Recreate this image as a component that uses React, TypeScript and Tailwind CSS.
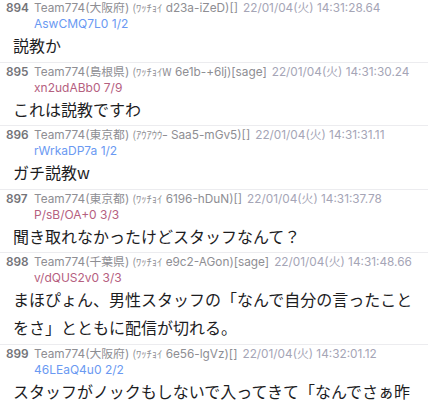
import React from "react";

type Post = {
  no: number;
  pref: string;
  wacchoi: string;
  mail: string;
  date: string;
  id: string;
  count: string;
  many: boolean;
  body: string;
};

const posts: Post[] = [
  { no: 894, pref: "大阪府", wacchoi: "ﾜｯﾁｮｲ d23a-iZeD", mail: "", date: "22/01/04(火) 14:31:28.64", id: "AswCMQ7L0", count: "1/2", many: false, body: "説教か" },
  { no: 895, pref: "島根県", wacchoi: "ﾜｯﾁｮｲW 6e1b-+6lj", mail: "sage", date: "22/01/04(火) 14:31:30.24", id: "xn2udABb0", count: "7/9", many: true, body: "これは説教ですわ" },
  { no: 896, pref: "東京都", wacchoi: "ｱｳｱｳｳｰ Saa5-mGv5", mail: "", date: "22/01/04(火) 14:31:31.11", id: "rWrkaDP7a", count: "1/2", many: false, body: "ガチ説教w" },
  { no: 897, pref: "東京都", wacchoi: "ﾜｯﾁｮｲ 6196-hDuN", mail: "", date: "22/01/04(火) 14:31:37.78", id: "P/sB/OA+0", count: "3/3", many: true, body: "聞き取れなかったけどスタッフなんて？" },
  { no: 898, pref: "千葉県", wacchoi: "ﾜｯﾁｮｲ e9c2-AGon", mail: "sage", date: "22/01/04(火) 14:31:48.66", id: "v/dQUS2v0", count: "3/3", many: true, body: "まほぴょん、男性スタッフの「なんで自分の言ったことをさ」とともに配信が切れる。" },
  { no: 899, pref: "大阪府", wacchoi: "ﾜｯﾁｮｲ 6e56-lgVz", mail: "", date: "22/01/04(火) 14:32:01.12", id: "46LEaQ4u0", count: "2/2", many: false, body: "スタッフがノックもしないで入ってきて「なんでさぁ昨" },
];

function PostItem({ p, first }: { p: Post; first: boolean }) {
  const [kana, rest] = p.wacchoi.split(" ");
  return (
    <div className={first ? "pb-[2.5px]" : "border-t border-[#ececef] pt-[1px] pb-[2.5px]"}>
      <div className="flex whitespace-nowrap text-[11.8px] leading-[16px] pl-[6px] font-['Inter','Noto_Sans_CJK_JP',sans-serif]">
        <span className="w-[28px] shrink-0 font-semibold text-[#737378]">{p.no}</span>
        <span className="text-[#8e8e93]">
          Team774({p.pref}){" "}
          <span className="font-['Noto_Sans_CJK_JP'] text-[10.5px]">({kana}</span>{" "}
          {rest})[{p.mail}]
        </span>
        <span className="ml-[5px] text-[#a5a5b6]">{p.date}</span>
      </div>
      <div
        className={
          "pl-[34px] text-[12px] leading-[15px] whitespace-nowrap font-['Inter',sans-serif] " +
          (p.many ? "text-[#b5607f]" : "text-[#6a99f2]")
        }
      >
        {p.id} {p.count}
      </div>
      <div className="pl-[13px] pr-[8px] text-[16px] leading-[28px] text-[#1d1d1f] font-['Noto_Sans_CJK_JP',sans-serif]">
        {p.body}
      </div>
    </div>
  );
}

export default function App() {
  return (
    <div className="w-[428px] h-[400px] overflow-hidden bg-white">
      {posts.map((p, i) => (
        <PostItem key={p.no} p={p} first={i === 0} />
      ))}
    </div>
  );
}
